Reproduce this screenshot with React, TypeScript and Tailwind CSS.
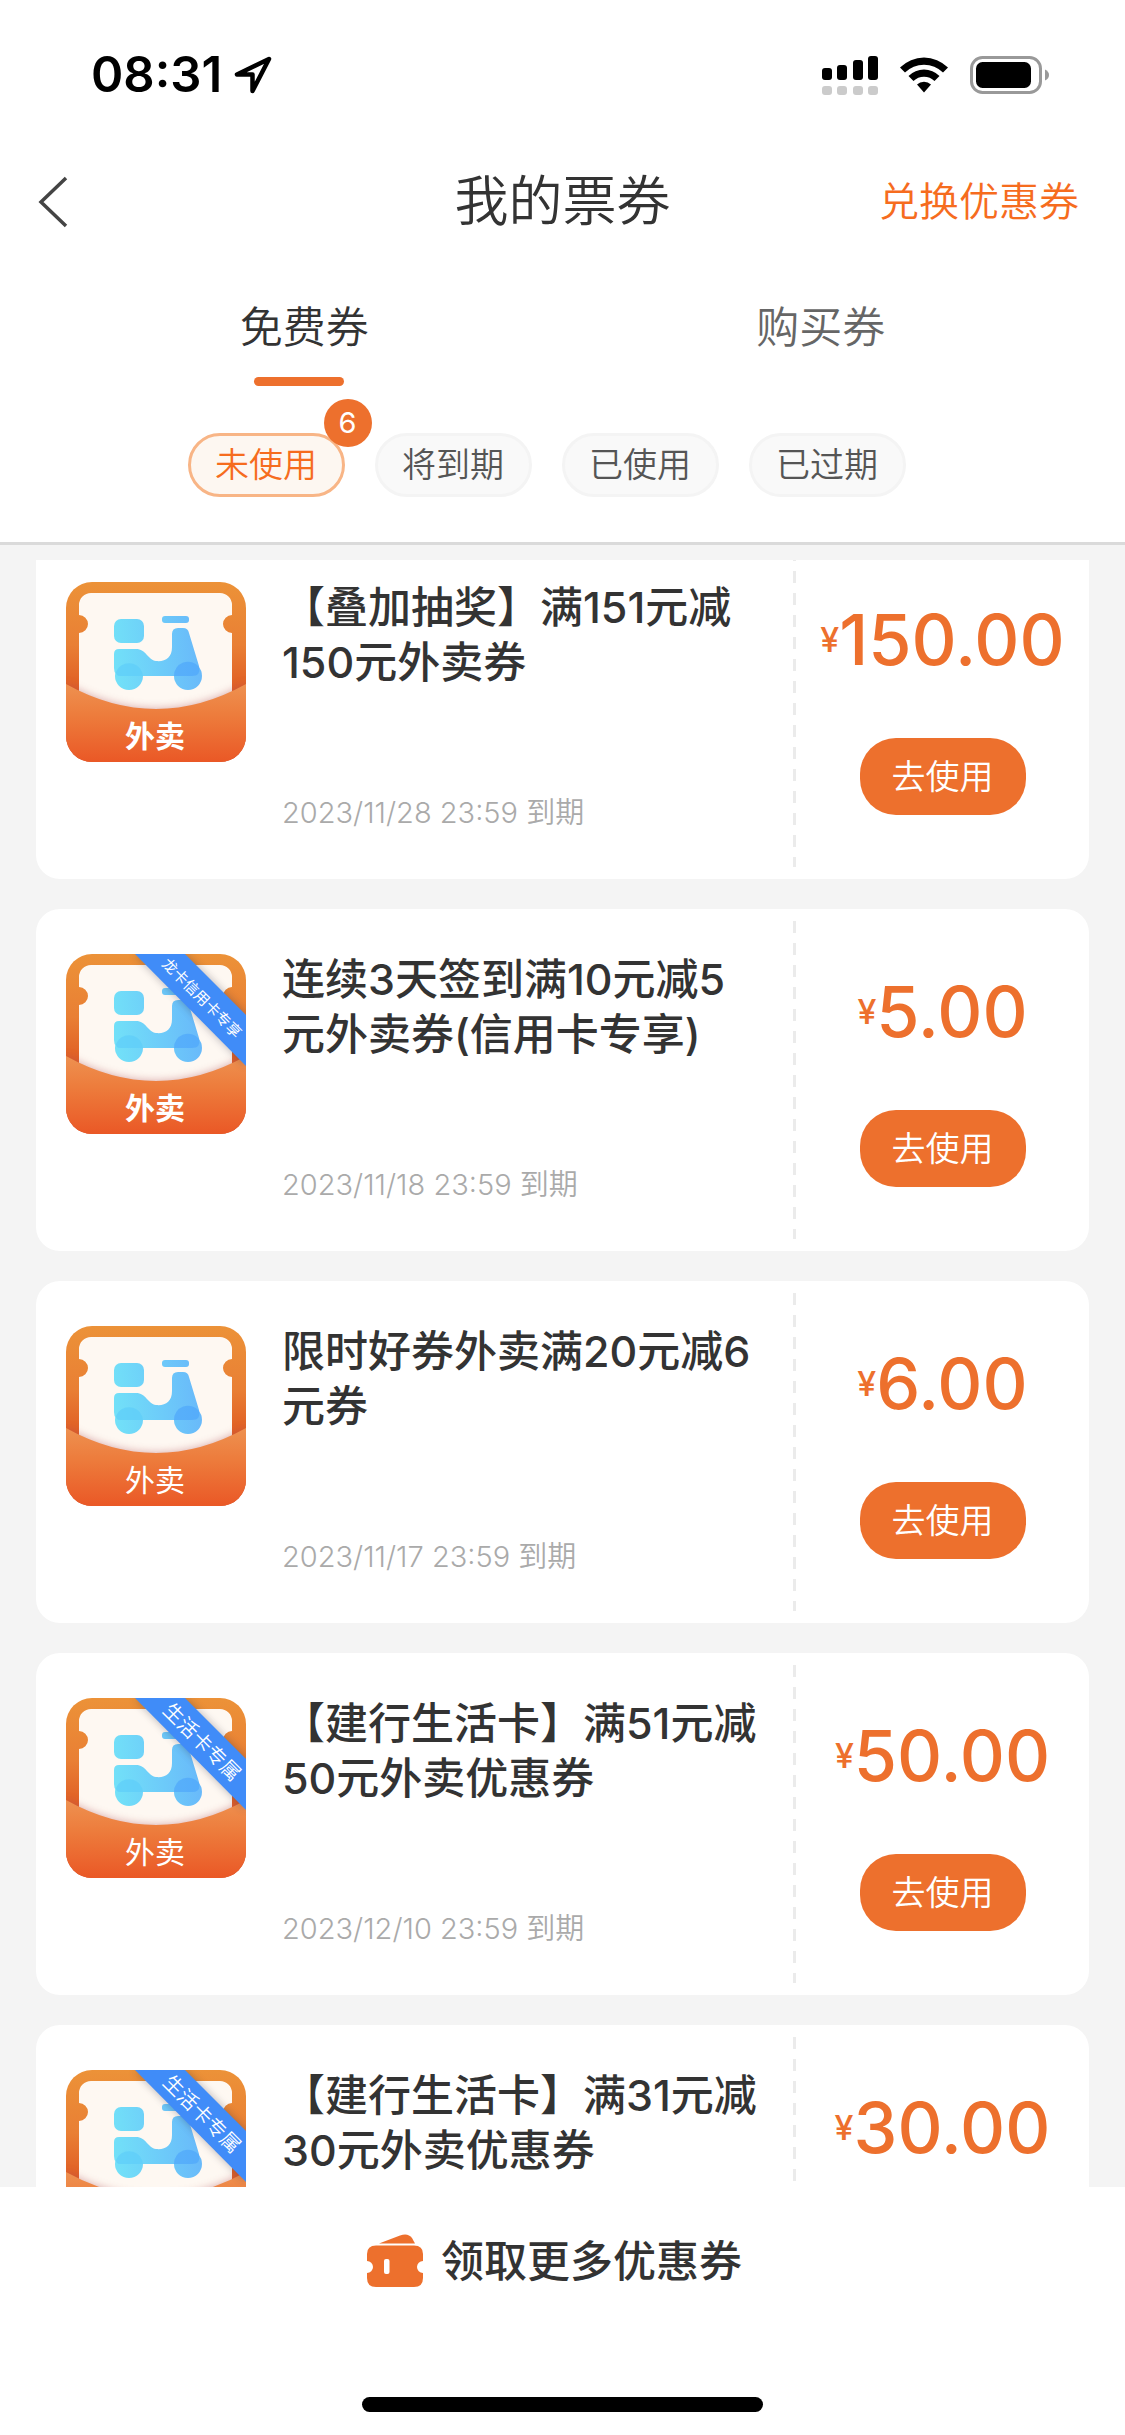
import React, { useId, useState } from 'react';

type Coupon = {
  id: number;
  title: string;
  expires: string;
  amount: string;
  ribbon?: string;
  boldLabel?: boolean;
};

const coupons: Coupon[] = [
  { id: 1, title: '【叠加抽奖】满151元减150元外卖券', expires: '2023/11/28 23:59', amount: '150.00', boldLabel: true },
  { id: 2, title: '连续3天签到满10元减5元外卖券(信用卡专享)', expires: '2023/11/18 23:59', amount: '5.00', ribbon: '龙卡信用卡专享', boldLabel: true },
  { id: 3, title: '限时好券外卖满20元减6元券', expires: '2023/11/17 23:59', amount: '6.00' },
  { id: 4, title: '【建行生活卡】满51元减50元外卖优惠券', expires: '2023/12/10 23:59', amount: '50.00', ribbon: '生活卡专属' },
  { id: 5, title: '【建行生活卡】满31元减30元外卖优惠券', expires: '2023/12/10 23:59', amount: '30.00', ribbon: '生活卡专属' },
];

const filters = ['未使用', '将到期', '已使用', '已过期'];

function StatusBar() {
  return (
    <div className="flex h-[150px] items-start justify-between pt-[50px] pr-[75px] pl-[91px] text-black">
      <div className="flex h-[50px] items-center gap-3">
        <span className="text-[49px] leading-[50px] font-semibold">08:31</span>
        <svg width="38" height="38" viewBox="0 0 38 38" fill="none" stroke="currentColor" strokeWidth="4.5" strokeLinejoin="round">
          <path d="M35 3 L3 18.5 H18.5 V35 Z" />
        </svg>
      </div>
      <div className="flex h-[50px] items-center gap-[22px]">
        <svg width="56" height="40" viewBox="0 0 56 40">
          <g fill="#000">
            <rect x="0" y="13" width="10" height="12" rx="3" />
            <rect x="15" y="10" width="10" height="15" rx="3" />
            <rect x="31" y="5" width="10" height="20" rx="3" />
            <rect x="46" y="1" width="10" height="24" rx="3" />
          </g>
          <g fill="#cbcbcb">
            <rect x="0" y="31" width="10" height="9" rx="3" />
            <rect x="15" y="31" width="10" height="9" rx="3" />
            <rect x="31" y="31" width="10" height="9" rx="3" />
            <rect x="46" y="31" width="10" height="9" rx="3" />
          </g>
        </svg>
        <svg width="48" height="36" viewBox="0 0 48 36">
          <path d="M0 10.5 A34 34 0 0 1 48 10.5 L43 15.5 A27 27 0 0 0 5 15.5 Z" />
          <path d="M8.5 19 A22 22 0 0 1 39.5 19 L34.5 24 A15 15 0 0 0 13.5 24 Z" />
          <path d="M17 27.5 A10 10 0 0 1 31 27.5 L24 35.5 Z" />
        </svg>
        <svg width="80" height="38" viewBox="0 0 80 38">
          <rect x="1.5" y="1.5" width="69" height="35" rx="11" fill="none" stroke="#999" strokeWidth="3" />
          <rect x="6" y="6" width="55" height="26" rx="6.5" />
          <path d="M75 13.5 Q79 15.5 79 19 Q79 22.5 75 24.5 Z" fill="#999" />
        </svg>
      </div>
    </div>
  );
}

function TakeoutIcon({ ribbon, boldLabel }: { ribbon?: string; boldLabel?: boolean }) {
  const id = useId();
  return (
    <svg className="shrink-0" width="180" height="180" viewBox="0 0 180 180" role="img" aria-label="外卖">
      <defs>
        <clipPath id={id + 'clip'}>
          <rect width="180" height="180" rx="26" />
        </clipPath>
        <linearGradient id={id + 'back'} x1="0" y1="0" x2="0" y2="1">
          <stop offset="0" stopColor="#ec9238" />
          <stop offset="0.35" stopColor="#e97f34" />
          <stop offset="0.62" stopColor="#df5a22" />
        </linearGradient>
        <linearGradient id={id + 'front'} gradientUnits="userSpaceOnUse" x1="0" y1="102" x2="0" y2="180">
          <stop offset="0" stopColor="#ee9150" />
          <stop offset="0.4" stopColor="#ed7c3c" />
          <stop offset="1" stopColor="#ea5826" />
        </linearGradient>
        <linearGradient id={id + 'blue'} gradientUnits="userSpaceOnUse" x1="48" y1="70" x2="140" y2="60">
          <stop offset="0" stopColor="#72e0f8" />
          <stop offset="1" stopColor="#68b6fa" />
        </linearGradient>
        <filter id={id + 'soft'} x="-20%" y="-20%" width="140%" height="140%">
          <feGaussianBlur stdDeviation="4" />
        </filter>
      </defs>
      <g clipPath={`url(#${id}clip)`}>
        <rect width="180" height="180" fill={`url(#${id}back)`} />
        <path
          d="M25 11 H154 A12 12 0 0 1 166 23 V33 A9 9 0 0 0 166 51 V140 H13 V51 A9 9 0 0 0 13 33 V23 A12 12 0 0 1 25 11 Z"
          fill="#fef8f2"
        />
        <g fill={`url(#${id}blue)`}>
          <rect x="48" y="37" width="30" height="24" rx="7" />
          <rect x="96" y="34" width="27" height="7" rx="3" />
          <path d="M48 72 Q48 67 53 67 H70 C80 67 82 78 90 79 C99 80 106 76 106 65 V52 Q106 46 112 46 H117 Q122 46 123 51 L133 84 Q135 94 126 94 H56 Q48 94 48 86 Z" />
          <circle cx="63" cy="94" r="14" />
          <circle cx="122" cy="94" r="14" />
        </g>
        <path d="M50 90 A14 14 0 0 1 76 90 L77 94 H54 Q50 94 50 90 Z" fill="#5ecdf9" opacity="0.7" />
        <path d="M108 94 A14 14 0 0 1 133 85 Q135 94 126 94 Z" fill="#4fa6fb" opacity="0.7" />
        <path d="M0 102 Q90 152 180 102 V180 H0 Z" fill="#b0525a" opacity="0.5" filter={`url(#${id}soft)`} />
        <path d="M0 102 Q90 152 180 102 V180 H0 Z" fill={`url(#${id}front)`} />
        {ribbon && (
          <>
            <path d="M69 0 L119 0 L180 61 V112 Z" fill="#334" opacity="0.35" filter={`url(#${id}soft)`} />
            <path d="M69 0 H119 L180 61 V112 Z" fill="#408cf8" />
            <text
              x="136"
              y="44"
              transform="rotate(45 136 44)"
              textAnchor="middle"
              dominantBaseline="central"
              fill="#fff"
              className={ribbon.length > 5 ? 'text-[15px]' : 'text-[20px] font-[350]'}
            >
              {ribbon}
            </text>
          </>
        )}
      </g>
      <text x="89" y="165" textAnchor="middle" fill="#fff" className={boldLabel ? 'text-[30px] font-bold' : 'text-[30px]'}>
        外卖
      </text>
    </svg>
  );
}

function CouponCard({ coupon }: { coupon: Coupon }) {
  return (
    <li className="flex h-[342px] shrink-0 rounded-3xl bg-white">
      <div className="flex min-w-0 flex-1 gap-9 pt-[45px] pr-[30px] pl-[30px]">
        <TakeoutIcon ribbon={coupon.ribbon} boldLabel={coupon.boldLabel} />
        <div className="-mt-0.5 flex min-w-0 flex-1 flex-col justify-between pb-11">
          <h2 className="text-[43px] leading-[55px] font-medium text-[#333]">{coupon.title}</h2>
          <p className="text-[29px] leading-[44px] font-[350] text-[#aaa]">{coupon.expires} 到期</p>
        </div>
      </div>
      <div className="my-3 w-[3px] bg-[repeating-linear-gradient(to_bottom,#ebebeb_0_12px,transparent_12px_22px)]" />
      <div className="flex w-[293px] shrink-0 flex-col items-center pt-[63px] text-[#ed702d]">
        <p className="flex items-center font-medium">
          <span className="text-[34px] leading-[80px]">¥</span>
          <span className="text-[70px] leading-[80px]">{coupon.amount}</span>
        </p>
        <button className="mt-[58px] h-[77px] w-[166px] rounded-[36px] bg-[#ed702d] text-[34px] font-[350] text-white">去使用</button>
      </div>
    </li>
  );
}

export default function App() {
  const [filter, setFilter] = useState('未使用');

  return (
    <div className="flex h-screen flex-col bg-[#f4f4f4] font-['Inter','Noto_Sans_CJK_SC',sans-serif] text-[#333]">
      <header className="border-b-[3px] border-[#dadada] bg-white">
        <StatusBar />

        {/* Title bar */}
        <div className="grid h-[104px] grid-cols-[1fr_auto_1fr] items-center px-[38px]">
          <button aria-label="返回" className="justify-self-start">
            <svg width="30" height="52" viewBox="0 0 30 52" fill="none" stroke="#444" strokeWidth="3.5">
              <path d="M28 2 L3 26 L28 50" />
            </svg>
          </button>
          <h1 className="text-[54px] leading-[64px] font-[350]">我的票券</h1>
          <a href="#redeem" className="mr-2 justify-self-end text-[40px] leading-[48px] font-[350] text-[#f66c1e]">兑换优惠券</a>
        </div>

        {/* Tabs */}
        <div role="tablist" className="flex px-[46px] pt-[43px]">
          <button role="tab" aria-selected="true" className="flex flex-1 flex-col items-center text-[43px] leading-[60px] font-[350]">
            免费券
            <span className="mt-5 mr-[10px] h-[9px] w-[90px] rounded-full bg-[#ed702d]" />
          </button>
          <button role="tab" aria-selected="false" className="flex flex-1 flex-col items-center text-[43px] leading-[60px] font-[350] text-[#666]">
            购买券
          </button>
        </div>

        {/* Status filters */}
        <div className="flex justify-center pt-[47px] pr-[2px] pb-[45px]">
          {filters.map((name) => (
            <button
              key={name}
              onClick={() => setFilter(name)}
              className={
                name === filter
                  ? 'relative mr-[30px] h-[64px] w-[157px] rounded-full border-[3px] border-[#f8b586] bg-[#fdf7f1] text-[34px] leading-[50px] font-[350] text-[#f66c1e]'
                  : 'relative mr-[30px] h-[64px] w-[157px] rounded-full border-[3px] border-[#f4f4f4] bg-[#f9f9f9] text-[34px] leading-[50px] font-[350] text-[#555]'
              }
            >
              {name}
              {name === '未使用' && (
                <span className="absolute -top-[37px] -right-[30px] flex size-12 items-center justify-center rounded-full bg-[#ed702d] text-[29px] font-normal text-white">
                  6
                </span>
              )}
            </button>
          ))}
        </div>
      </header>

      <main className="flex min-h-0 flex-1 flex-col px-9 pt-[15px]">
        <div className="min-h-0 flex-1 overflow-hidden">
          <ul className="-mt-[23px] flex flex-col gap-[30px]">
            {coupons.map((coupon) => (
              <CouponCard key={coupon.id} coupon={coupon} />
            ))}
          </ul>
        </div>
      </main>

      <footer className="flex h-[248px] shrink-0 flex-col items-center justify-between bg-white pt-[46px] pb-[23px]">
        <a href="#more" className="flex items-center gap-[17px] pr-4 text-[43px] leading-[56px] font-medium">
          <svg width="57" height="54" viewBox="0 0 57 54" fill="#ed702d">
            <path d="M12 9.5 L33 1.5 Q41 -1.5 45 4 L48 9.5 Z" />
            <path d="M9 11.5 H47 Q56 11.5 56 20 V27 A6 6 0 0 0 56 39 V44 Q56 53 47 53 H9 Q0 53 0 44 V39 A6 6 0 0 0 0 27 V20 Q0 11.5 9 11.5 Z" />
            <rect x="17" y="25" width="5.5" height="15" rx="2" fill="#fff" />
          </svg>
          领取更多优惠券
        </a>
        <div className="h-[15px] w-[401px] rounded-full bg-black" />
      </footer>
    </div>
  );
}
